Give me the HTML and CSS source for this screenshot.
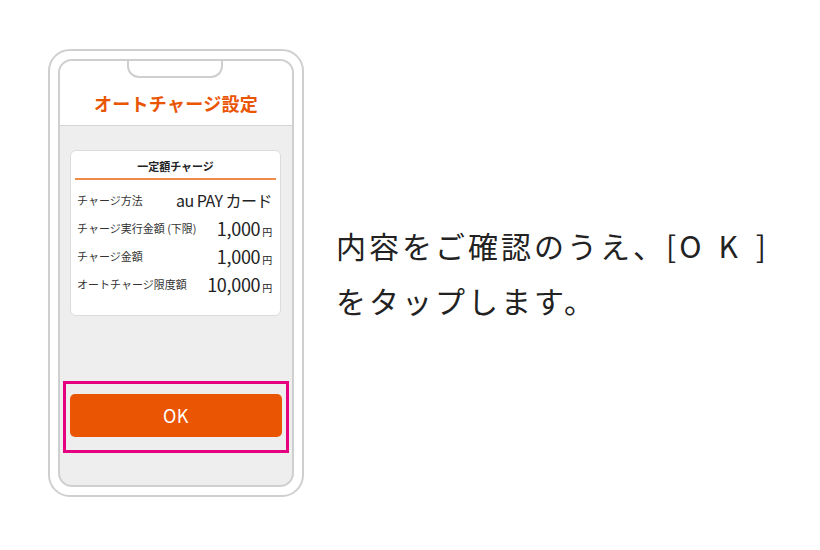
FILE: index.html
```html
<!DOCTYPE html>
<html lang="ja">
<head>
    <meta charset="UTF-8">
    <title>オートチャージ設定</title>
    <link rel="stylesheet" href="styles.css">
</head>
<body>
<div class="page">
    <div class="phone">
        <div class="screen">
            <div class="notch"></div>
            <div class="screen-head">オートチャージ設定</div>
            <div class="card">
                <div class="card-title">一定額チャージ</div>
                <div class="card-line"></div>
                <div class="row">
                    <span class="label">チャージ方法</span>
                    <span class="value value-card">au PAY カード</span>
                </div>
                <div class="row">
                    <span class="label">チャージ実行金額 (下限)</span>
                    <span class="value">1,000<small>円</small></span>
                </div>
                <div class="row">
                    <span class="label">チャージ金額</span>
                    <span class="value">1,000<small>円</small></span>
                </div>
                <div class="row">
                    <span class="label">オートチャージ限度額</span>
                    <span class="value">10,000<small>円</small></span>
                </div>
            </div>
            <div class="highlight">
                <div class="ok-btn">OK</div>
            </div>
        </div>
    </div>
    <p class="guide">内容をご確認のうえ、<span class="ok-word">[<span class="ok-o">O</span><span class="ok-k">K</span>]</span><br>をタップします。</p>
</div>
</body>
</html>
```

FILE: styles.css
```css
* {
    padding: 0;
    margin: 0;
    box-sizing: border-box;
}

body {
    background: #fff;
    font-family: "Noto Sans CJK JP", "Noto Sans", sans-serif;
    color: #222;
}

.page {
    display: flex;
    align-items: center;
    gap: 32px;
    padding: 49px 0 0 48px;
}

.phone {
    width: 256px;
    height: 448px;
    border: 2px solid #cfcfcf;
    border-radius: 22px;
    padding: 8px;
    background: #fff;
}

.screen {
    position: relative;
    height: 100%;
    border: 2px solid #cfcfcf;
    border-radius: 14px;
    background: #eee;
    overflow: hidden;
}

/* 上部の切り欠き */
.notch {
    position: absolute;
    top: -2px;
    left: 67px;
    width: 96px;
    height: 19px;
    background: #fff;
    border: 2px solid #cfcfcf;
    border-top: none;
    border-radius: 0 0 12px 12px;
}

.screen-head {
    height: 65px;
    padding-top: 32px;
    background: #fff;
    border-bottom: 1px solid #d4d4d4;
    text-align: center;
    font-size: 18px;
    line-height: 20px;
    font-weight: bold;
    letter-spacing: 0.3px;
    color: #ea5504;
}

.card {
    margin: 24px 11px 0 10px;
    padding-bottom: 17px;
    background: #fff;
    border: 1px solid #dcdcdc;
    border-radius: 6px;
}

.card-title {
    padding-top: 8px;
    text-align: center;
    font-size: 11px;
    line-height: 14px;
    font-weight: bold;
    color: #222;
}

.card-line {
    height: 2px;
    margin: 5px 4px 0;
    background: #f08a4b;
}

.card-line + .row {
    margin-top: 6px;
}

.row {
    display: flex;
    justify-content: space-between;
    align-items: center;
    height: 28px;
    padding: 0 8px 0 6px;
}

.label {
    font-size: 11px;
    color: #333;
}

.value {
    font-size: 18px;
    color: #222;
    letter-spacing: -0.3px;
}

.value small {
    font-size: 10px;
    margin-left: 2px;
}

.value-card {
    font-size: 16px;
    letter-spacing: -0.5px;
}

.highlight {
    margin: 65px 3px 0;
    padding: 10px 4px 13px;
    border: 3px solid #e4007f;
}

.ok-btn {
    height: 43px;
    border-radius: 5px;
    background: #ea5504;
    color: #fff;
    text-align: center;
    font-size: 18px;
    line-height: 43px;
    letter-spacing: 0.5px;
}

.guide {
    font-size: 30px;
    line-height: 55px;
    letter-spacing: 3px;
    color: #222;
}

.ok-word {
    letter-spacing: 3px;
}

.ok-o {
    letter-spacing: 17px;
}

.ok-k {
    letter-spacing: 18px;
}
```
